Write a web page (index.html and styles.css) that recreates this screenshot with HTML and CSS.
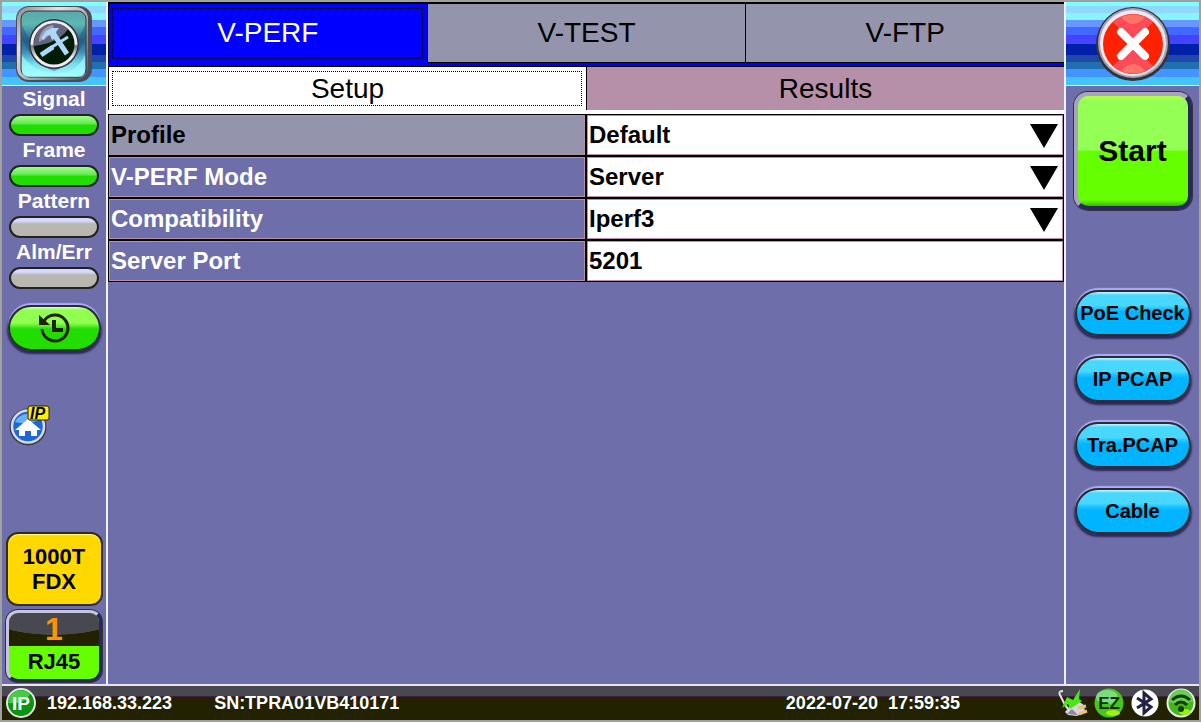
FILE: index.html
```
<!DOCTYPE html>
<html lang="en">
<head>
  <meta charset="UTF-8">
  <meta name="viewport" content="width=device-width, initial-scale=1.0">
  <title>V-PERF</title>
  <link rel="stylesheet" href="styles.css">
</head>
<body>
  <div class="screen">
    <aside class="side left">
      <div class="side-head">
        <button class="icon-btn" aria-label="Tools">
          <svg width="78" height="78" viewBox="0 0 78 78">
            <defs>
              <linearGradient id="tile" x1="0" y1="0" x2="0" y2="1">
                <stop offset="0" stop-color="#58a8a8"/>
                <stop offset="0.2" stop-color="#5cb8b4"/>
                <stop offset="0.45" stop-color="#28688c"/>
                <stop offset="0.6" stop-color="#3888b0"/>
                <stop offset="0.8" stop-color="#78dcec"/>
                <stop offset="1" stop-color="#a4ffff"/>
              </linearGradient>
              <linearGradient id="rim" x1="0" y1="0" x2="1" y2="1">
                <stop offset="0" stop-color="#88888c"/>
                <stop offset="0.3" stop-color="#e4e0e8"/>
                <stop offset="0.6" stop-color="#a8a4ac"/>
                <stop offset="1" stop-color="#50505a"/>
              </linearGradient>
              <linearGradient id="ring" x1="0" y1="0" x2="0" y2="1">
                <stop offset="0.5" stop-color="#f0ecf4"/>
                <stop offset="0.55" stop-color="#787880"/>
                <stop offset="0.8" stop-color="#f0ecf4"/>
              </linearGradient>
            </defs>
            <rect x="1" y="1" width="76" height="76" rx="13" fill="#4c4c58"/>
            <rect x="2" y="2" width="71" height="73" rx="12" fill="url(#rim)"/>
            <rect x="6" y="6" width="65" height="66" rx="8" fill="url(#tile)" stroke="#333340"/>
            <path d="M7 20Q18 46 39 46T70 20V33Q62 58 39 66 16 58 7 33z" fill="#1c5080" opacity=".45"/>
            <path d="M7 50q10 16 32 18t31-18v16q0 6-6 6H13q-6 0-6-6z" fill="#a4ffff" opacity=".6"/>
            <circle cx="39" cy="39" r="25" fill="#33333c"/>
            <circle cx="39" cy="39" r="22" fill="#001c04" stroke="url(#ring)" stroke-width="3"/>
            <path d="M19 39a20 20 0 0 1 34-15Q44 38 19 41z" fill="#64647c"/>
            <path d="M24 37a16 16 0 0 1 14-17q4 8-14 17z" fill="#9c9cb4"/>
            <path d="M26 50l12-8" stroke="#acd8ff" stroke-width="5"/>
            <path d="M37 42l16-10" stroke="#acd8ff" stroke-width="3"/>
            <path d="M38 28l14 21" stroke="#acd8ff" stroke-width="5"/>
            <path d="M26 33l5-7 6-3h7l-3 4 1 5-5 3-2-5-4 1-2 4z" fill="#acd8ff"/>
          </svg>
        </button>
      </div>

      <div class="leds">
        <div class="led">Signal<span class="lamp on"></span></div>
        <div class="led">Frame<span class="lamp on"></span></div>
        <div class="led">Pattern<span class="lamp"></span></div>
        <div class="led">Alm/Err<span class="lamp"></span></div>
      </div>

      <button class="pill green" aria-label="History">
        <svg width="32" height="32" viewBox="0 0 32 32" fill="none" stroke="#222200" stroke-width="3">
          <path d="M6 9A13 13 0 1 1 4 17"/>
          <path d="M16 8v10h9" stroke-width="4"/>
          <path d="M1 3v10h11z" fill="#222200" stroke="none"/>
        </svg>
      </button>

      <svg class="home-ip" width="42" height="42" viewBox="0 0 42 42">
        <circle cx="19" cy="23" r="18.500" fill="#3c3c48"/>
        <circle cx="19" cy="22.500" r="16" fill="#1c68d4" stroke="#d8d8e0" stroke-width="2.500"/>
        <path d="M6 18a15 15 0 0 1 25-3Q20 22 6 18z" fill="#68b0ff"/>
        <path d="M19 15L6 26h4v6h6v-5h6v5h6v-6h4z" fill="#fff"/>
        <rect x="19" y="2" width="21" height="14" rx="2" fill="#fff000" stroke="#222200"/>
        <text x="21" y="15" class="ip-tag">IP</text>
      </svg>

      <div class="link-box">1000T<br>FDX</div>
      <button class="port"><span class="port-no">1</span><span class="port-name">RJ45</span></button>
    </aside>

    <main>
      <div class="tabs" role="tablist">
        <button class="active" role="tab">V-PERF</button>
        <button role="tab">V-TEST</button>
        <button role="tab">V-FTP</button>
      </div>
      <div class="subtabs" role="tablist">
        <button class="active" role="tab">Setup</button>
        <button role="tab">Results</button>
      </div>

      <form class="settings">
        <div class="row selected">
          <label for="profile">Profile</label>
          <div class="field drop"><select id="profile"><option>Default</option></select></div>
        </div>
        <div class="row">
          <label for="mode">V-PERF Mode</label>
          <div class="field drop"><select id="mode"><option>Server</option><option>Client</option></select></div>
        </div>
        <div class="row">
          <label for="compat">Compatibility</label>
          <div class="field drop"><select id="compat"><option>Iperf3</option></select></div>
        </div>
        <div class="row">
          <label for="port">Server Port</label>
          <div class="field"><input type="text" id="port" value="5201"></div>
        </div>
      </form>
    </main>

    <aside class="side right">
      <div class="side-head">
        <button class="icon-btn" aria-label="Close">
          <svg width="76" height="76" viewBox="0 0 76 76">
            <circle cx="38" cy="38" r="37" fill="#33333c"/>
            <circle cx="38" cy="37" r="35" fill="#a8a4b4"/>
            <circle cx="38" cy="37" r="33" fill="#ece8f4"/>
            <circle cx="38" cy="38" r="30" fill="#ff2200"/>
            <path d="M18 16a30 30 0 0 1 40 0L38 37zM18 60a30 30 0 0 0 40 0L38 39z" fill="#ff4a58"/>
            <path d="M26 11a30 30 0 0 1 24 0q-12 14-24 0zM26 65a30 30 0 0 0 24 0q-12-14-24 0z" fill="#ff7468"/>
            <path d="M26 26l24 24M50 26L26 50" stroke="#fff" stroke-width="8" stroke-linecap="round"/>
          </svg>
        </button>
      </div>
      <button class="start">Start</button>
      <div class="actions">
        <button class="pill">PoE Check</button>
        <button class="pill">IP PCAP</button>
        <button class="pill">Tra.PCAP</button>
        <button class="pill">Cable</button>
      </div>
    </aside>
  </div>

  <footer class="status">
    <svg width="32" height="32" viewBox="0 0 32 32">
      <circle cx="16" cy="16" r="14" fill="#0a9410" stroke="#e4e4e4" stroke-width="2"/>
      <path d="M3 16a13 13 0 0 1 22-9Q20 18 3 16z" fill="#44cc44"/>
      <text x="16" y="23" class="ip-badge">IP</text>
    </svg>
    <span class="addr">192.168.33.223</span>
    <span>SN:TPRA01VB410171</span>
    <time>2022-07-20&nbsp; 17:59:35</time>
    <div class="tray">
      <svg width="30" height="30" viewBox="0 0 30 30">
        <path d="M5 3Q0 3 2 7t4 8 6 8" fill="none" stroke="#e0e0e0" stroke-width="2"/>
        <path d="M11 19l9-6 6 4 1 7-8 4-9-1-3-3z" fill="#d8d4e0"/>
        <path d="M9 26l5-5 6 6z" fill="#8c8898"/>
        <path d="M20 20l8-2M21 26l8-3" stroke="#e8c078" stroke-width="3"/>
        <path d="M4 20l5-11 6 3 7-11-1 10 3 2-12 8-2-5z" fill="#48e818"/>
      </svg>
      <svg width="30" height="30" viewBox="0 0 30 30">
        <circle cx="15" cy="15" r="14.500" fill="#48c41c"/>
        <ellipse cx="13" cy="9" rx="11" ry="7" fill="#7cdc80"/>
        <ellipse cx="19" cy="25" rx="7" ry="3" fill="#a0f010"/>
        <text x="15" y="21" class="ez">EZ</text>
      </svg>
      <svg width="30" height="30" viewBox="0 0 30 30">
        <circle cx="15" cy="15" r="13.500" fill="#fff"/>
        <path d="M7 10l14 9-7 6V5l7 6-14 9" fill="none" stroke="#222244" stroke-width="3"/>
      </svg>
      <svg width="30" height="30" viewBox="0 0 30 30">
        <circle cx="15" cy="15" r="13.500" fill="#44b818" stroke="#ececec" stroke-width="2"/>
        <path d="M3 14a12 12 0 0 1 24-1Q16 18 3 14z" fill="#68d050"/>
        <ellipse cx="19" cy="24" rx="6" ry="3" fill="#98f010"/>
        <g fill="none" stroke="#143c08" stroke-width="3">
          <path d="M6 12q9-8 18 0M9 17q6-6 12 0"/>
        </g>
        <circle cx="15" cy="21" r="3" fill="#143c08"/>
      </svg>
    </div>
  </footer>
</body>
</html>
```

FILE: styles.css
```
* {
  box-sizing: border-box;
}
body {
  margin: 0;
  border: 2px solid #a0a0a0;
  min-height: 100vh;
  display: flex;
  flex-direction: column;
  background-color: #6e6eaa;
  color: #fff;
  font-family: "Liberation Sans", Arial, sans-serif;
  font-weight: bold;
}
button, input, select {
  font: inherit;
  margin: 0;
  padding: 0;
  border: none;
  border-radius: 0;
}
button {
  cursor: pointer;
}
.screen {
  flex: 1;
  display: grid;
  grid-template-columns: 106px 1fr 135px;
  border-bottom: 2px solid #e8e4f4;
}

/* side columns */
.side {
  display: flex;
  flex-direction: column;
  align-items: center;
}
.left {
  border-right: 2px solid #f0f0ff;
}
.right {
  border-left: 2px solid #f0f0ff;
}
.side-head {
  width: 100%;
  height: 84px;
  display: flex;
  justify-content: center;
  align-items: center;
  border-bottom: 1px solid #fff;
  background: linear-gradient(#80ffff 4px, #90d8ff 4px 11px, #88f4ff 11px 18px, #6898ff 18px 25px, #4468ff 25px 33px, #4444ff 33px 42px, #0020a8 42px 53px, #2048a8 53px 60px, #2070b0 60px 67px, #4494ff 67px 75px, #44c4ff 75px);
}
.icon-btn {
  background: none;
  line-height: 0;
}
.leds {
  padding: 1px 0 14px;
}
.led {
  width: 90px;
  height: 51px;
  font-size: 21px;
  line-height: 24px;
  text-align: center;
}
.lamp {
  display: block;
  height: 22px;
  margin-top: 3px;
  border: 2px solid #222;
  border-radius: 11px;
  background: linear-gradient(#d8d8ff 3px, #b8b8b0 6px);
}
.lamp.on {
  background: linear-gradient(#a0ff88, #60e850 8px, #22dd00 9px);
}
.pill {
  width: 116px;
  height: 46px;
  border: 2px solid #2c2c30;
  border-radius: 23px;
  background: linear-gradient(#c8f8ff, #48d8ff 3px 14px, #30ccff 15px, #00b4ff 20px);
  box-shadow: 0 -2px 1px #acacf8, 0 2px 2px 1px #28285c;
  color: #000;
  font-size: 20px;
  white-space: nowrap;
}
.pill.green {
  width: 93px;
  display: flex;
  justify-content: center;
  align-items: center;
  background: linear-gradient(#d8ffc8, #90ff50 3px 16px, #48e820 20px, #22dd00 22px);
}
.home-ip {
  align-self: flex-start;
  margin: 53px 0 0 7px;
}
.ip-tag {
  font-size: 16px;
  font-style: italic;
  fill: #000;
}
.link-box {
  width: 97px;
  margin-top: auto;
  padding: 10px 0;
  border: 2px solid #302c20;
  border-radius: 12px;
  background-color: #ffd800;
  box-shadow: inset 0 1px 1px #ffff80;
  color: #000;
  font-size: 22px;
  line-height: 25px;
  text-align: center;
}
.port {
  width: 96px;
  height: 72px;
  margin: 4px 0 2px;
  display: flex;
  flex-direction: column;
  overflow: hidden;
  border: 3px solid #c8c4dc;
  border-right-color: #28285c;
  border-bottom-color: #28285c;
  border-radius: 12px;
  background-color: #66ff00;
  box-shadow: 0 0 0 1px #33333c;
  color: #000;
  font-size: 22px;
}
.port-no {
  width: 100%;
  color: #ff9400;
  font-size: 32px;
  line-height: 33px;
  background: radial-gradient(ellipse 70px 22px at 50% 0, #484850 98%, #222200);
}
.port-name {
  width: 100%;
  line-height: 32px;
}
.start {
  width: 118px;
  height: 118px;
  margin-top: 6px;
  border: 4px solid #a8a4c0;
  border-right-color: #28285c;
  border-bottom-color: #28285c;
  border-radius: 14px;
  background: linear-gradient(#b8ff44, #94ff54 5px 54px, #66ff00 55px 104px, #38b800);
  box-shadow: 0 0 0 1px #33333c;
  color: #000;
  font-size: 30px;
}
.actions {
  margin-top: 80px;
  display: flex;
  flex-direction: column;
  gap: 20px;
}

/* tabs */
.tabs, .subtabs {
  display: flex;
  font-size: 28px;
  font-weight: normal;
}
.tabs button, .subtabs button {
  flex: 1;
  border-left: 1px solid #000;
  color: #000;
}
.tabs {
  height: 64px;
  border-top: 2px solid #000;
  border-bottom: 3px solid #0000ff;
}
.tabs button {
  background-color: #9494ac;
  border-bottom: 1px solid #000;
}
.tabs .active {
  background-color: #0000ff;
  color: #fff;
  border-bottom-color: #0000ff;
}
.subtabs {
  height: 48px;
  border-top: 1px solid #000;
  border-bottom: 4px solid #fff;
}
.subtabs button {
  background-color: #b590a8;
}
.subtabs .active {
  background-color: #fff;
}
.tabs .active, .subtabs .active {
  outline: 1px dotted #000;
  outline-offset: -5px;
}
.tabs .active {
  outline-color: #000040;
}

/* settings */
.settings {
  margin: 0;
  padding: 1px;
  background-color: #000;
  font-size: 24px;
}
.row {
  display: grid;
  grid-template-columns: 1fr 1fr;
  gap: 2px;
}
.row + .row {
  margin-top: 2px;
}
.row label, .field {
  height: 40px;
  border: 1px solid #b590a8;
  line-height: 38px;
}
.row label {
  padding-left: 1px;
  background-color: #6e6eaa;
}
.selected label {
  background-color: #9494ac;
  color: #000;
}
.field {
  position: relative;
  background-color: #fff;
}
.field select, .field input {
  display: block;
  width: 100%;
  height: 38px;
  padding-left: 1px;
  background: none;
  color: #000;
  appearance: none;
}
.drop::after {
  content: "";
  position: absolute;
  top: 8px;
  right: 4px;
  border: 14px solid transparent;
  border-top: 24px solid #000;
  border-bottom: none;
  pointer-events: none;
}

/* status bar */
.status {
  height: 34px;
  padding: 0 3px;
  display: flex;
  align-items: center;
  background: linear-gradient(#484850 10px, #402040 10px 11px, #222200 11px);
  font-size: 18px;
}
.ip-badge {
  font-size: 19px;
  text-anchor: middle;
  fill: #fff;
}
.addr {
  margin: 0 42px 0 10px;
}
.status time {
  margin-left: auto;
}
.tray {
  margin-left: 98px;
  display: flex;
  gap: 6px;
}
.ez {
  font-size: 17px;
  text-anchor: middle;
  fill: #103010;
}
```
